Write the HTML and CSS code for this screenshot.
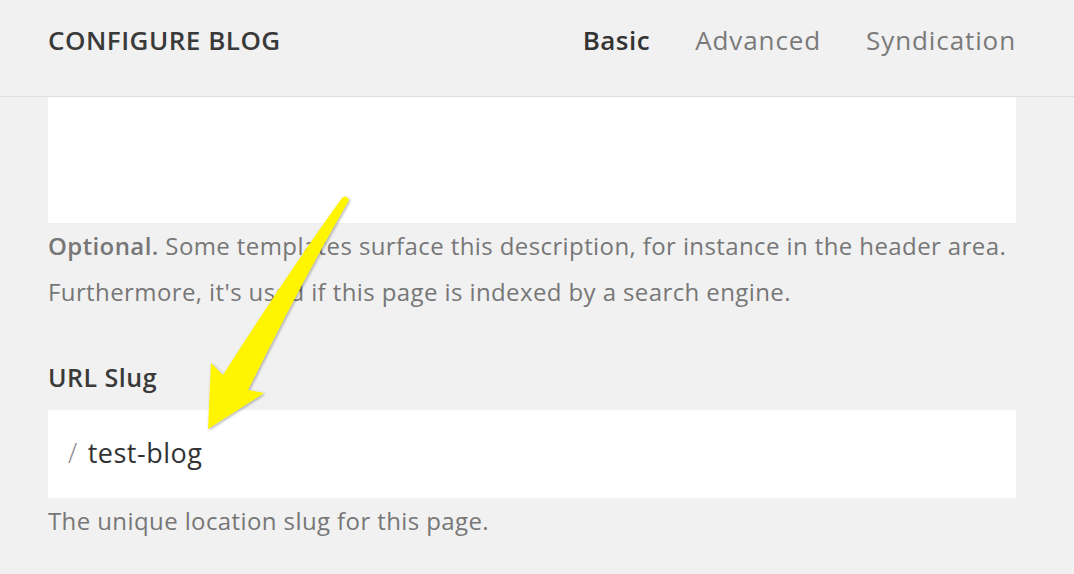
FILE: index.html
```html
<!DOCTYPE html>
<html>
<head>
<meta charset="utf-8">
<link rel="stylesheet" href="styles.css">
</head>
<body>
<div class="page">
  <header class="header">
    <h1 class="title">CONFIGURE BLOG</h1>
    <nav class="tabs">
      <span class="tab active">Basic</span>
      <span class="tab">Advanced</span>
      <span class="tab">Syndication</span>
    </nav>
  </header>
  <main class="content">
    <div class="textarea"></div>
    <p class="help"><strong>Optional.</strong> Some templates surface this description, for instance in the header area. Furthermore, it's used if this page is indexed by a search engine.</p>
    <label class="label">URL Slug</label>
    <div class="input"><span class="slash">/</span><span class="value">test-blog</span></div>
    <p class="help">The unique location slug for this page.</p>
  </main>
  <svg class="arrow" width="1074" height="574" viewBox="0 0 1074 574">
    <defs>
      <filter id="sh" x="-20%" y="-20%" width="140%" height="140%">
        <feDropShadow dx="1" dy="1" stdDeviation="1.5" flood-color="#000" flood-opacity="0.35"/>
      </filter>
    </defs>
    <path filter="url(#sh)" fill="#fff500" d="M342 198 Q346 194 349 200 Q300 285 248 390 L264 393 L208 429 L211 363 L223 375 Q290 270 342 198 Z"/>
  </svg>
</div>
</body>
</html>
```
FILE: styles.css
```css
* { box-sizing: border-box; }
html, body { margin: 0; padding: 0; }
body {
  background: #f1f1f1;
  font-family: "Open Sans", "Liberation Sans", sans-serif;
  color: #3e3e3e;
}
.page { position: relative; width: 1074px; height: 574px; overflow: hidden; }
.header {
  height: 97px;
  border-bottom: 1px solid #dedede;
  display: flex;
  align-items: flex-start;
  justify-content: space-between;
  padding: 22px 58px 0 48px;
}
.title {
  margin: 0;
  font-size: 26px;
  line-height: 36px;
  font-weight: 600;
  letter-spacing: 0.5px;
  color: #3a3a3a;
}
.tabs { display: flex; gap: 45px; }
.tab { font-size: 26px; line-height: 36px; letter-spacing: 0.9px; color: #7a7a7a; }
.tab.active { color: #333; font-weight: 600; letter-spacing: 0.5px; }
.content { padding: 0 58px 0 48px; }
.textarea { height: 126px; background: #fff; }
.help {
  margin: 0;
  font-size: 24px;
  letter-spacing: 0.4px;
  line-height: 46px;
  color: #777;
}
.help strong { font-weight: 600; }
.label {
  display: block;
  margin-top: 44px;
  font-size: 25px;
  letter-spacing: 0.5px;
  line-height: 36px;
  font-weight: 600;
  color: #3a3a3a;
}
.input {
  margin-top: 15px;
  height: 88px;
  background: #fff;
  display: flex;
  align-items: center;
  padding-left: 20px;
  padding-bottom: 4px;
  font-size: 27px;
  letter-spacing: 0.5px;
}
.slash { color: #888; font-weight: 300; margin-right: 10px; }
.value { color: #333; }
.arrow { position: absolute; left: 0; top: 0; pointer-events: none; }
```
